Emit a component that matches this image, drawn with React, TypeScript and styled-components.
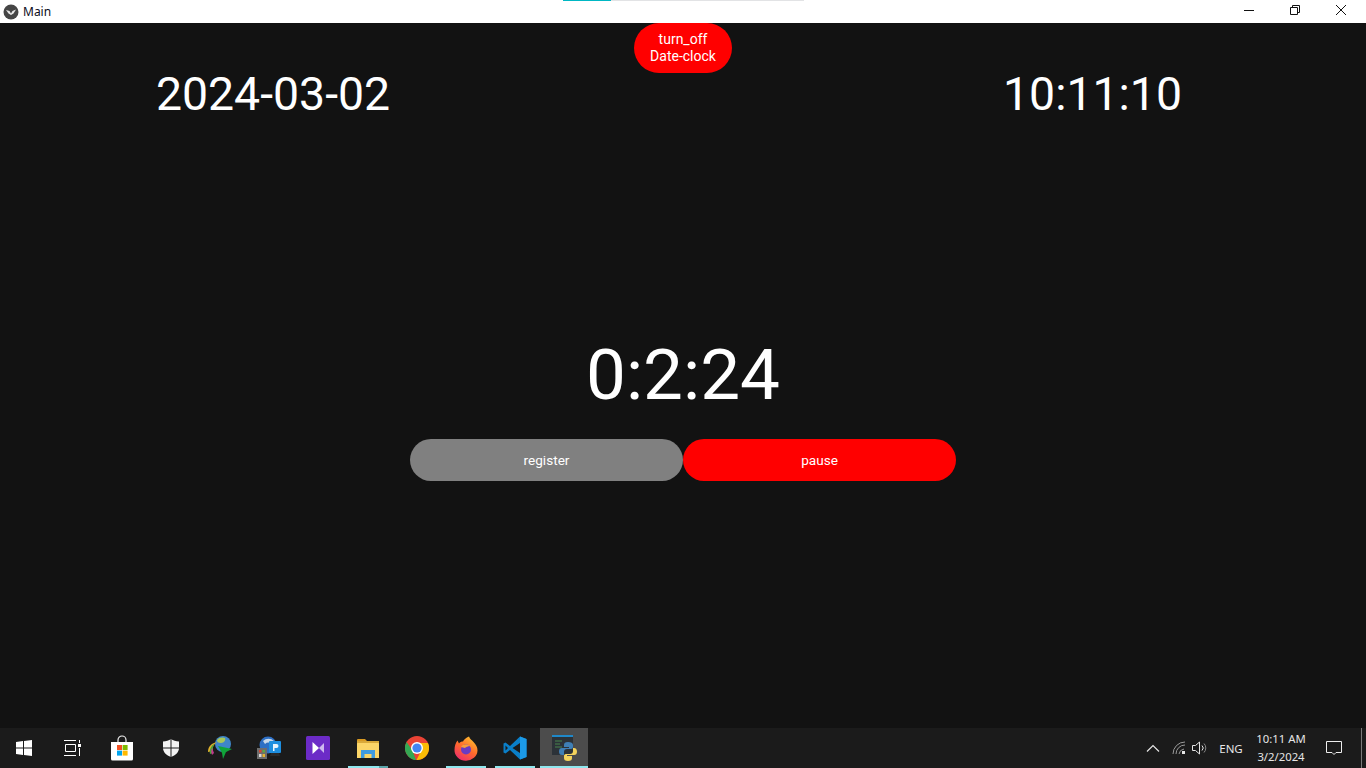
import React from 'react';
import styled, { createGlobalStyle } from 'styled-components';

const GlobalStyle = createGlobalStyle`
  html, body {
    margin: 0;
    padding: 0;
    overflow: hidden;
    background: #121212;
  }
`;

const Screen = styled.div`
  width: 1366px;
  height: 768px;
  display: flex;
  flex-direction: column;
  overflow: hidden;
`;

const TitleBar = styled.div`
  position: relative;
  flex: 0 0 23px;
  display: flex;
  align-items: center;
  background: #fff;
`;

const AppIcon = styled.svg`
  width: 16px;
  height: 16px;
  margin-left: 3px;
`;

const WindowTitle = styled.span`
  margin-left: 4px;
  font-family: 'Noto Sans', sans-serif;
  font-size: 12px;
  color: #0c0c1c;
`;

const LoadStrip = styled.div`
  position: absolute;
  left: 563px;
  top: 0;
  width: 241px;
  height: 1px;
  background: #e2e3e5;
`;

const LoadStripDone = styled.div`
  width: 48px;
  height: 1px;
  background: #00b7c3;
`;

const WindowControls = styled.div`
  margin-left: auto;
  margin-right: 2px;
  display: flex;
  height: 100%;
`;

const WindowButton = styled.div`
  width: 46px;
  height: 100%;
  display: flex;
  align-items: center;
  justify-content: center;
  padding-bottom: 3px;
  box-sizing: border-box;
`;

const Body = styled.main`
  flex: 1;
  background: #121212;
  color: #fff;
  font-family: Roboto, sans-serif;
  display: flex;
  flex-direction: column;
`;

const TopRow = styled.div`
  flex: 0 0 142px;
  display: grid;
  grid-template-columns: 546px 274px 545px;
`;

const BigValue = styled.div`
  display: flex;
  align-items: center;
  justify-content: center;
  font-size: 46.4px;
  line-height: 1;
  height: 142px;
`;

const ToggleCell = styled.div`
  display: flex;
  justify-content: center;
  align-items: flex-start;
`;

const ToggleButton = styled.button`
  width: 98px;
  height: 50px;
  border: none;
  border-radius: 25px;
  background: #ff0000;
  color: #fff;
  padding: 0;
  font-family: Roboto, sans-serif;
  font-size: 14px;
  line-height: 17px;
`;

const CentrePanel = styled.div`
  flex: 1;
  display: flex;
  flex-direction: column;
  align-items: center;
  padding-top: 160px;
`;

const Stopwatch = styled.div`
  font-size: 71px;
  line-height: 100px;
  height: 114px;
`;

const ActionRow = styled.div`
  display: flex;
`;

const ActionButton = styled.button<{ $tone: string }>`
  width: 273px;
  height: 42px;
  border: none;
  border-radius: 21px;
  background: ${({ $tone }) => $tone};
  color: #fff;
  padding: 0;
  font-family: Roboto, sans-serif;
  font-size: 13.6px;
`;

const Taskbar = styled.footer`
  flex: 0 0 40px;
  display: flex;
  background: #1b1b1b;
  font-family: 'Noto Sans', sans-serif;
  color: #e6e6e6;
`;

const TaskGroup = styled.div<{ $offset: number }>`
  display: flex;
  gap: 1px;
  margin-left: ${({ $offset }) => $offset}px;
`;

const TaskItem = styled.div<{ $active?: boolean; $line?: boolean; $stacked?: boolean }>`
  position: relative;
  width: 48px;
  height: 40px;
  display: flex;
  align-items: center;
  justify-content: center;
  background: ${({ $active }) => ($active ? '#4c4c4c' : 'transparent')};

  &::after {
    content: '';
    display: ${({ $line }) => ($line ? 'block' : 'none')};
    position: absolute;
    bottom: 0;
    left: ${({ $active }) => ($active ? '0' : '4px')};
    right: ${({ $active }) => ($active ? '0' : '4px')};
    height: 2px;
    background: ${({ $stacked }) =>
      $stacked ? 'linear-gradient(90deg, #8fe7ee 31px, #5aa5aa 31px)' : '#8fe7ee'};
  }
`;

const Tray = styled.div`
  margin-left: auto;
  display: flex;
  align-items: center;
  height: 100%;
`;

const TrayIcon = styled.div<{ $width: number }>`
  width: ${({ $width }) => $width}px;
  display: flex;
  justify-content: center;
  align-items: center;
`;

const LangLabel = styled.div`
  width: 36px;
  margin-left: 4px;
  padding-left: 2px;
  box-sizing: border-box;
  text-align: center;
  font-size: 11.5px;
`;

const ClockBlock = styled.div`
  width: 66px;
  text-align: center;
  font-size: 11.3px;
  line-height: 18px;
`;

const NotifyButton = styled.div`
  width: 39px;
  margin-right: 8px;
  display: flex;
  justify-content: center;
`;

const ShowDesktop = styled.div`
  width: 5px;
  height: 100%;
  border-left: 1px solid #7a7a7a;
  box-sizing: border-box;
`;

const WindowsIcon = () => (
  <svg width="18" height="18" viewBox="0 0 18 18" fill="#fff">
    <path d="M1 3.100 8 2.100V8.500H1ZM9 2 17 .9V8.500H9ZM1 9.500H8V15.900L1 14.900ZM9 9.500H17V17.100L9 16Z" />
  </svg>
);

const TaskViewIcon = () => (
  <svg width="18" height="18" viewBox="0 0 18 18" fill="none" stroke="#fff" strokeWidth="1">
    <path d="M1 1.500H13M1 16.500H13M2.500 5.500H12.500V12.500H2.500ZM16.500 1V4M16.500 9V17" />
    <rect x="15" y="5" width="3" height="3" fill="#fff" stroke="none" />
  </svg>
);

const StoreIcon = () => (
  <svg width="24" height="26" viewBox="0 0 24 26">
    <path d="M8 8V5a4 4 0 0 1 8 0v3" fill="none" stroke="#eee" strokeWidth="1.200" />
    <path d="M1 7H23V24a1.500 1.500 0 0 1-1.500 1.500H2.500A1.500 1.500 0 0 1 1 24Z" fill="#fff" />
    <rect x="7" y="10" width="5" height="5" fill="#f25022" />
    <rect x="12.600" y="10" width="5" height="5" fill="#7fba00" />
    <rect x="7" y="15.600" width="5" height="5" fill="#00a4ef" />
    <rect x="12.600" y="15.600" width="5" height="5" fill="#ffb900" />
  </svg>
);

const ShieldIcon = () => (
  <svg width="18" height="20" viewBox="0 0 18 20">
    <path d="M9 1C7 2.500 4 3.400 1 3.500V10c0 4 3.400 7.400 8 9 4.600-1.600 8-5 8-9V3.500C14 3.400 11 2.500 9 1Z" fill="#f2f2f2" />
    <path d="M9 1V19M1 10H17" stroke="#1b1b1b" strokeWidth="1" />
  </svg>
);

const IdmIcon = () => (
  <svg width="26" height="26" viewBox="0 0 26 26">
    <circle cx="16" cy="9" r="8" fill="#3f86c9" />
    <path d="M10 5c2-3 6-3 8-2 1 2-1 5-4 5s-4-1-4-3Z" fill="#a7c75a" />
    <path d="M1 17c0-6 4-9 9-10-3 2-5 5-4 9Z" fill="#e0b02c" />
    <path d="M3 19c-1-4 1-8 4-10-1 3-2 6-1 9Z" fill="#49a53a" />
    <path d="M5 20c-1-2-1-5 0-7l2 5Z" fill="#c3398f" />
    <path d="M11 11 25 14 19 17 16 24 15 18Z" fill="#10a53a" />
  </svg>
);

const NetToolIcon = () => (
  <svg width="26" height="26" viewBox="0 0 26 26">
    <circle cx="12" cy="10" r="8.500" fill="#2d6fc4" />
    <path d="M7 6a8 8 0 0 1 11 0l-2 3a5 5 0 0 0-7 0Z" fill="#c9d9ea" />
    <rect x="13" y="6" width="12" height="12" rx="1" fill="#1e8fe0" />
    <path d="M17 9h3.500a2 2 0 0 1 0 4H18.500v3H17Z" fill="#e8f4fc" />
    <path d="M15 18h8l1 3H14Z" fill="#2a2a2a" />
    <rect x="1" y="13" width="10" height="11" fill="#6d6d6d" />
    <rect x="3" y="15" width="2.500" height="2.500" fill="#d8452f" />
    <rect x="6.500" y="15" width="2.500" height="2.500" fill="#5aa844" />
    <rect x="3" y="19" width="2.500" height="3" fill="#d9d9d9" />
    <rect x="6.500" y="19" width="2.500" height="3" fill="#e6b431" />
  </svg>
);

const VisualStudioIcon = () => (
  <svg width="24" height="24" viewBox="0 0 24 24">
    <rect width="24" height="24" rx="1.500" fill="#6c2bc7" />
    <path d="M6.500 6 13 12 6.500 18Z" fill="#fff" />
    <path d="M13 12 18 7V17Z" fill="#cdb8ef" />
  </svg>
);

const FolderIcon = () => (
  <svg width="24" height="22" viewBox="0 0 24 22">
    <path d="M1 3a1 1 0 0 1 1-1h7l2 2h-10Z" fill="#d99a22" />
    <rect x="1" y="4" width="22" height="17" fill="#d9a93a" />
    <rect x="1" y="6" width="22" height="15" rx=".5" fill="#fbd568" />
    <path d="M5 21V13h14v8h-3.500v-4h-7v4Z" fill="#3f9be0" />
  </svg>
);

const ChromeIcon = () => (
  <svg width="24" height="24" viewBox="0 0 24 24">
    <circle cx="12" cy="12" r="12" fill="#ea4335" />
    <path d="M12 24A12 12 0 0 1 1.600 6L7.500 14.500 11 24Z" fill="#34a853" />
    <path d="M12 7H23A12 12 0 0 1 11.500 24L16.500 14Z" fill="#fbbc05" />
    <circle cx="12" cy="12" r="6" fill="#fff" />
    <circle cx="12" cy="12" r="4.600" fill="#4285f4" />
  </svg>
);

const FirefoxIcon = () => (
  <svg width="24" height="25" viewBox="0 0 24 25">
    <defs>
      <linearGradient id="fxBody" x1="0.800" y1="0" x2="0.200" y2="1">
        <stop offset="0" stopColor="#ffc52e" />
        <stop offset="0.500" stopColor="#ff6a2c" />
        <stop offset="1" stopColor="#ee2a6f" />
      </linearGradient>
    </defs>
    <path d="M15 .5c1 3 2.500 3 4.500 5.500 2.500 2.500 4 5 4 8.500A11.500 10.500 0 0 1 .5 14C.5 10 1.500 7 3.500 4.500L5 7.500c1-1.500 2.500-2 4-2 1-2.500 3-3.500 6-5Z" fill="url(#fxBody)" />
    <circle cx="12" cy="13.500" r="5" fill="#6a3bc2" />
    <path d="M7 11c2-3 6-3 9-1-2 0-4 1-5 2Z" fill="#f5a03c" />
  </svg>
);

const VsCodeIcon = () => (
  <svg width="24" height="24" viewBox="0 0 24 24">
    <path d="M17 .5 7 10 2.500 6.500.5 7.500v9l2 1L7 14l10 9.500 6.500-2.500V3Z" fill="#0a7fc9" />
    <path d="M17 .5 23.500 3V21L17 23.500Z" fill="#1c9ae8" />
    <path d="M17 7 9.500 12 17 17Z M2.500 9.500 5 12 2.500 14.500Z" fill="#1b1b1b" />
  </svg>
);

const PythonAppIcon = () => (
  <svg width="26" height="28" viewBox="0 0 26 28">
    <rect x="1" y="1" width="21" height="20" fill="#2c3238" />
    <rect x="1" y="1" width="21" height="2" fill="#1f88c9" />
    <path d="M4 7h7M4 10h5M4 13h7" stroke="#3f6a45" strokeWidth="1.500" />
    <path d="M17 8c-3 0-4 1-4 3v2h5v1h-7c-2 0-3 1-3 3.500S9 21 11 21h2v-3c0-2 1-3 3-3h4c1.500 0 2-1 2-2v-2c0-2-2-3-5-3Z" fill="#3f7fb5" />
    <path d="M17 27c3 0 4-1 4-3v-2h-5v-1h7c2 0 3-1 3-3.500S24.500 14 23 14h-1v3c0 2-1 3-3 3h-4c-1.500 0-2 1-2 2v2c0 2 1 3 4 3Z" fill="#f5d45c" />
  </svg>
);

const leftItems = [
  { key: 'store', icon: <StoreIcon /> },
  { key: 'shield', icon: <ShieldIcon /> },
  { key: 'idm', icon: <IdmIcon /> },
  { key: 'net', icon: <NetToolIcon /> },
  { key: 'vs', icon: <VisualStudioIcon /> },
];

const rightItems = [
  { key: 'folder', icon: <FolderIcon />, line: true, stacked: true },
  { key: 'chrome', icon: <ChromeIcon /> },
  { key: 'firefox', icon: <FirefoxIcon />, line: true },
  { key: 'vscode', icon: <VsCodeIcon />, line: true },
  { key: 'python', icon: <PythonAppIcon />, line: true, active: true },
];

const App: React.FC = () => (
  <>
    <GlobalStyle />
    <Screen>
      <TitleBar>
        <AppIcon viewBox="0 0 16 16">
          <circle cx="8" cy="8" r="7.500" fill="#454545" />
          <path d="M3 6 6.500 7 8 9.500 9.500 7 13 5.500 10.500 9.500 8 11 5.500 9.500Z" fill="#e8e8e8" />
        </AppIcon>
        <WindowTitle>Main</WindowTitle>
        <LoadStrip>
          <LoadStripDone />
        </LoadStrip>
        <WindowControls>
          <WindowButton>
            <svg width="10" height="10" viewBox="0 0 10 10">
              <path d="M0 5.500H10" stroke="#111" />
            </svg>
          </WindowButton>
          <WindowButton>
            <svg width="10" height="10" viewBox="0 0 10 10" fill="none" stroke="#111">
              <path d="M.5 2.500H7.500V9.500H.5ZM2.500 2.500V.5H9.500V7.500H7.500" />
            </svg>
          </WindowButton>
          <WindowButton>
            <svg width="10" height="10" viewBox="0 0 10 10" fill="none" stroke="#111">
              <path d="M0 0 10 10M10 0 0 10" />
            </svg>
          </WindowButton>
        </WindowControls>
      </TitleBar>
      <Body>
        <TopRow>
          <BigValue>2024-03-02</BigValue>
          <ToggleCell>
            <ToggleButton>
              turn_off
              <br />
              Date-clock
            </ToggleButton>
          </ToggleCell>
          <BigValue>10:11:10</BigValue>
        </TopRow>
        <CentrePanel>
          <Stopwatch>0:2:24</Stopwatch>
          <ActionRow>
            <ActionButton $tone="#808080">register</ActionButton>
            <ActionButton $tone="#ff0000">pause</ActionButton>
          </ActionRow>
        </CentrePanel>
      </Body>
      <Taskbar>
        <TaskItem>
          <WindowsIcon />
        </TaskItem>
        <TaskItem>
          <TaskViewIcon />
        </TaskItem>
        <TaskGroup $offset={2}>
          {leftItems.map(item => (
            <TaskItem key={item.key}>{item.icon}</TaskItem>
          ))}
        </TaskGroup>
        <TaskGroup $offset={2}>
          {rightItems.map(item => (
            <TaskItem key={item.key} $line={item.line} $active={item.active} $stacked={item.stacked}>
              {item.icon}
            </TaskItem>
          ))}
        </TaskGroup>
        <Tray>
          <TrayIcon $width={26}>
            <svg width="14" height="8" viewBox="0 0 14 8" fill="none" stroke="#e6e6e6" strokeWidth="1.200">
              <path d="M1 7.500 7 1.500 13 7.500" />
            </svg>
          </TrayIcon>
          <TrayIcon $width={26}>
            <svg width="14" height="14" viewBox="0 0 14 14" fill="none" stroke="#9a9a9a">
              <path d="M1 13A12 12 0 0 1 13 1M4 13A9 9 0 0 1 13 4M7 13a6 6 0 0 1 5-5" />
              <rect x="10" y="10" width="3" height="3" fill="#e6e6e6" stroke="none" />
            </svg>
          </TrayIcon>
          <TrayIcon $width={16}>
            <svg width="16" height="14" viewBox="0 0 16 14" fill="none" stroke="#e6e6e6">
              <path d="M.5 4.500H3.500L7.500 1V13L3.500 9.500H.5Z" />
              <path d="M10 4.500a3.500 3.500 0 0 1 0 5" />
              <path d="M12 2.500a6.500 6.500 0 0 1 0 9" stroke="#8a8a8a" />
            </svg>
          </TrayIcon>
          <LangLabel>ENG</LangLabel>
          <ClockBlock>
            10:11 AM
            <br />
            3/2/2024
          </ClockBlock>
          <NotifyButton>
            <svg width="16" height="16" viewBox="0 0 16 16" fill="none" stroke="#eee">
              <path d="M.5 1.500H15.500V12.500H10L8 14.500 6 12.500H.5Z" />
            </svg>
          </NotifyButton>
          <ShowDesktop />
        </Tray>
      </Taskbar>
    </Screen>
  </>
);

export default App;
